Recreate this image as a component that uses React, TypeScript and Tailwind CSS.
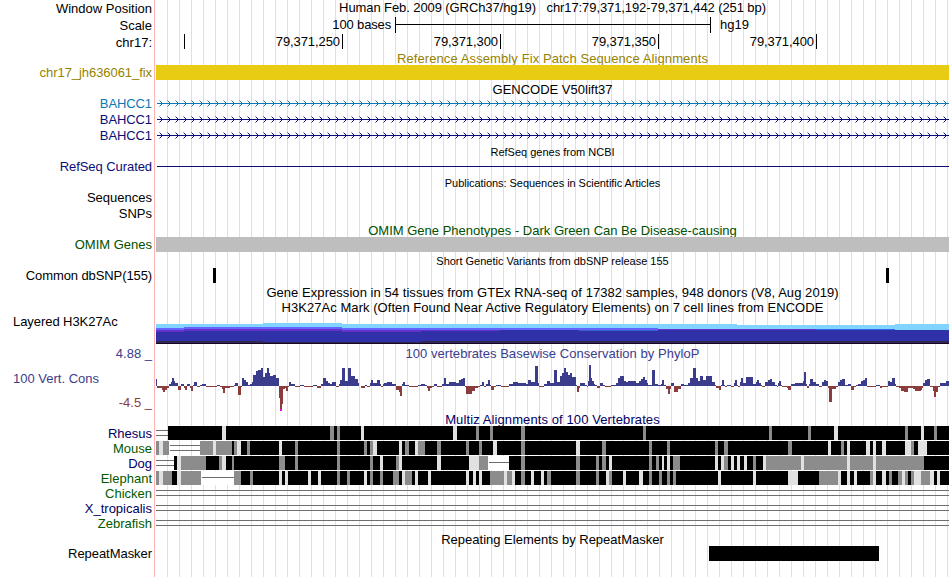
import type { ReactNode } from "react";

import clsx from "clsx";

type Tone = "l" | "g" | "k";
type Block = [x: number, width: number, tone: Tone];

// All drawings share the x axis of the browser image: tracks run from 156 to 949.
const X0 = 156;
const TRACK_WIDTH = 793;

const TONES: Record<Tone, string> = { l: "#e1e1e1", g: "#8c8c8c", k: "#000000" };

interface Species {
  name: string;
  color: string;
  start?: number;
  blocks?: Block[];
  doubleGaps?: [number, number][];
  singleGaps?: [number, number][];
}

const SPECIES: Species[] = [
  {
    name: "Rhesus",
    color: "text-[#000064]",
    doubleGaps: [[156, 168]],
    blocks: [
      [168, 781, "k"], [222, 4, "l"], [330, 4, "g"], [337, 3, "g"], [361, 3, "l"], [453, 4, "l"], [476, 3, "g"],
      [490, 3, "g"], [521, 4, "g"], [643, 3, "g"], [769, 3, "g"], [808, 3, "g"], [834, 4, "l"], [905, 3, "g"],
      [921, 3, "l"], [934, 3, "g"],
    ],
  },
  {
    name: "Mouse",
    color: "text-[#005a00]",
    doubleGaps: [[170, 200]],
    blocks: [
      [156, 13, "g"], [159, 4, "l"], [200, 749, "k"], [200, 13, "g"], [213, 3, "l"], [216, 16, "g"], [234, 3, "g"],
      [237, 4, "l"], [247, 3, "g"], [279, 3, "l"], [295, 3, "g"], [337, 3, "g"], [364, 3, "g"], [370, 3, "g"],
      [373, 4, "l"], [399, 3, "l"], [405, 4, "g"], [415, 3, "l"], [418, 7, "g"], [437, 4, "g"], [466, 3, "g"],
      [479, 3, "g"], [493, 4, "l"], [521, 4, "g"], [576, 4, "l"], [602, 4, "g"], [649, 3, "g"], [667, 3, "g"],
      [715, 3, "g"], [724, 4, "g"], [788, 4, "g"], [828, 3, "l"], [841, 3, "g"], [847, 3, "l"], [866, 4, "l"],
      [873, 3, "l"], [882, 4, "l"], [905, 6, "l"], [911, 3, "g"], [918, 9, "l"],
    ],
  },
  {
    name: "Dog",
    color: "text-[#000064]",
    doubleGaps: [[156, 174]],
    singleGaps: [[489, 509]],
    blocks: [
      [174, 314, "k"], [509, 440, "k"], [177, 4, "l"], [181, 25, "g"], [219, 3, "g"], [222, 4, "l"], [232, 2, "g"],
      [279, 6, "g"], [295, 3, "g"], [337, 3, "g"], [370, 3, "g"], [380, 3, "l"], [396, 3, "g"], [399, 3, "l"],
      [437, 4, "l"], [469, 10, "l"], [479, 9, "g"], [521, 4, "g"], [576, 4, "g"], [596, 3, "g"], [602, 4, "g"],
      [609, 3, "l"], [649, 3, "g"], [656, 3, "g"], [662, 2, "l"], [667, 3, "l"], [673, 7, "g"], [715, 3, "l"],
      [721, 3, "l"], [724, 4, "g"], [731, 3, "l"], [737, 3, "l"], [744, 3, "l"], [753, 3, "g"], [763, 3, "l"],
      [766, 158, "g"], [801, 3, "l"], [847, 3, "l"], [873, 3, "l"],
    ],
  },
  {
    name: "Elephant",
    color: "text-[#005a00]",
    singleGaps: [[202, 234]],
    blocks: [
      [156, 45, "k"], [234, 715, "k"], [156, 3, "g"], [159, 4, "l"], [163, 9, "g"], [177, 4, "l"], [181, 20, "g"],
      [234, 7, "g"], [250, 3, "g"], [279, 3, "l"], [285, 3, "l"], [308, 3, "l"], [318, 3, "l"], [337, 3, "g"],
      [347, 3, "g"], [364, 3, "l"], [370, 3, "g"], [380, 3, "g"], [393, 6, "g"], [402, 3, "l"], [405, 7, "g"],
      [415, 3, "l"], [428, 3, "l"], [466, 3, "l"], [473, 3, "l"], [479, 3, "l"], [490, 14, "g"], [504, 3, "l"],
      [507, 5, "g"], [512, 3, "l"], [521, 4, "g"], [531, 3, "l"], [541, 3, "l"], [547, 4, "g"], [576, 4, "g"],
      [596, 3, "g"], [606, 3, "l"], [609, 3, "g"], [623, 3, "l"], [639, 4, "l"], [649, 3, "g"], [659, 3, "g"],
      [667, 3, "g"], [673, 3, "g"], [718, 3, "l"], [753, 3, "l"], [788, 10, "l"], [819, 19, "g"], [838, 3, "l"],
      [847, 3, "l"], [854, 3, "l"], [870, 3, "g"], [873, 3, "l"], [882, 4, "l"], [889, 3, "g"], [898, 4, "g"],
      [902, 3, "l"], [905, 3, "g"], [911, 3, "g"], [914, 7, "l"], [921, 9, "g"], [930, 4, "l"], [937, 3, "l"],
    ],
  },
  { name: "Chicken", color: "text-[#005a00]", doubleGaps: [[156, 949]] },
  { name: "X_tropicalis", color: "text-[#000064]", doubleGaps: [[156, 949]] },
  { name: "Zebrafish", color: "text-[#005a00]", doubleGaps: [[156, 949]] },
];

// Each score holds from its x until the next entry.
const PHYLOP: [x: number, score: number][] = [
  [156, 7], [157, -2], [162, -4], [163, -6], [165, -4], [167, -2], [169, 2], [171, 4], [172, 8], [174, 5], [175, 3],
  [178, -4], [181, 2], [184, -2], [185, -4], [187, 2], [190, -2], [191, -5], [193, 1], [194, 4], [197, -1], [200, 1],
  [202, 2], [206, -1], [217, 1], [220, -1], [222, -3], [223, -7], [225, -2], [230, -1], [234, 1], [235, 3], [238, -9],
  [241, -1], [242, 8], [244, 6], [246, 4], [248, 1], [250, 2], [252, 4], [253, 11], [256, 15], [258, 16], [261, 18],
  [263, 9], [265, 13], [267, 18], [269, 13], [270, 10], [273, 11], [276, 8], [279, -12], [280, -24], [282, -18],
  [283, -3], [285, -2], [286, -5], [288, -1], [289, 4], [291, 2], [295, -1], [300, 1], [304, -1], [313, 1], [317, -2],
  [321, 2], [323, 8], [326, 5], [328, 3], [330, 2], [332, 4], [336, -1], [339, 2], [340, 6], [342, 18], [345, 5],
  [348, 18], [351, 10], [355, 7], [358, 3], [359, 0], [361, -2], [365, 1], [367, -1], [370, 3], [371, 6], [373, 3],
  [377, 6], [380, 2], [381, -1], [383, 2], [384, 3], [387, 4], [392, 2], [396, -4], [399, -6], [400, -10], [402, 2],
  [403, 4], [405, 1], [409, -1], [418, 1], [421, 2], [425, 1], [427, -2], [428, -5], [430, -2], [432, -1], [434, 2],
  [437, -1], [442, 2], [444, 8], [446, 2], [449, 4], [456, 3], [459, 6], [461, 7], [463, 8], [465, -1], [466, -8],
  [472, -5], [475, -2], [478, -1], [480, 1], [482, 4], [484, -1], [486, 2], [488, 6], [490, 1], [491, -4], [494, -1],
  [496, 1], [501, -1], [509, 2], [513, 4], [518, 3], [526, 2], [528, 6], [531, 4], [535, 20], [538, 3], [539, -1],
  [544, 2], [547, 5], [550, 3], [554, 16], [557, 4], [560, 10], [562, 13], [564, 18], [566, 14], [568, 11],
  [570, 13], [572, 9], [576, 1], [577, -6], [579, -2], [580, 3], [585, 1], [587, -1], [588, 5], [589, 21], [591, 8],
  [592, 5], [594, 2], [595, 1], [597, -2], [600, 3], [603, 1], [605, -1], [611, 1], [616, 3], [618, 8], [620, 10],
  [624, 5], [626, 4], [628, 5], [636, 3], [639, 5], [641, 7], [643, 9], [645, 6], [647, 3], [648, 1], [652, 16],
  [655, 2], [658, 1], [661, 2], [662, 6], [664, 1], [666, -3], [668, -8], [670, -3], [671, 3], [674, -6], [678, -3],
  [681, 2], [684, 1], [688, 3], [690, 8], [693, 18], [696, 8], [698, 5], [700, 10], [703, 6], [706, 10], [712, 4],
  [715, 1], [716, -2], [719, -4], [721, 1], [722, 6], [724, 1], [725, -1], [727, 1], [731, -1], [734, 3], [735, 6],
  [737, 1], [738, -1], [740, 4], [741, 8], [743, 3], [746, 9], [753, 2], [756, 4], [757, 6], [759, 3], [761, 1],
  [762, -1], [765, 4], [768, 6], [770, 7], [772, 4], [775, 1], [777, -1], [778, 3], [779, 5], [781, 1], [782, -1],
  [787, -2], [788, -4], [791, 2], [795, 3], [803, 5], [804, 14], [806, 2], [807, -2], [809, 2], [810, 7], [813, 4],
  [816, 2], [819, -1], [822, 4], [824, 6], [826, 5], [828, -2], [829, -16], [832, -3], [836, -1], [838, 4], [840, 6],
  [842, 7], [845, 1], [848, 2], [851, -4], [854, -1], [856, 1], [858, 2], [861, 5], [863, 6], [865, 8], [867, -1],
  [876, 1], [880, -2], [882, -1], [888, 5], [890, 4], [892, 8], [895, 2], [896, -1], [899, -2], [901, -5], [904, -6],
  [908, -2], [913, -3], [915, -5], [921, -4], [922, -2], [923, 3], [925, 6], [927, 7], [930, -1], [933, -5],
  [934, -11], [936, -6], [938, -1], [940, 3], [946, 5], [949, 0],
];

// Tops of the overlaid cell line signals, one entry per 25 bp bin.
const H3K27AC = [
  { x: 156, sky: 10, violet: 14, purple: 16, navy: 18, dark: 27 },
  { x: 184, sky: 10, violet: 13, purple: 15, navy: 17, dark: 27 },
  { x: 263, sky: 9, violet: 13, purple: 15, navy: 17, dark: 28 },
  { x: 342, sky: 10, violet: 14, purple: 16, navy: 18, dark: 28 },
  { x: 421, sky: 10, violet: 14, purple: 16, navy: 17, dark: 27 },
  { x: 500, sky: 10, violet: 14, purple: 16, navy: 16, dark: 27 },
  { x: 579, sky: 10, violet: 14, purple: 16, navy: 17, dark: 27, mid: "#3264c8" },
  { x: 658, sky: 10, violet: 15, purple: 15, navy: 16, dark: 27 },
  { x: 737, sky: 11, violet: 15, purple: 15, navy: 16, dark: 27 },
  { x: 816, sky: 11, violet: 15, purple: 15, navy: 16, dark: 27, mid: "#3264e6" },
  { x: 895, sky: 10, violet: 16, purple: 16, navy: 16, dark: 27 },
];

interface TitleProps {
  className?: string;
  children: ReactNode;
}

function Title({ className = "h-3.5", children }: TitleProps) {
  return (
    <div className={clsx("ml-[156px] flex w-[793px] justify-center leading-[15px]", className)}>
      <span className="whitespace-pre">{children}</span>
    </div>
  );
}

interface RowProps {
  label: string;
  labelClass?: string;
  className?: string;
  children?: ReactNode;
}

function Row({ label, labelClass, className = "h-4", children }: RowProps) {
  return (
    <div className={clsx("flex", className)}>
      <div className={clsx("mr-1 w-[152px] shrink-0 text-right leading-[15px] whitespace-pre", labelClass)}>{label}</div>
      <div className="w-[793px] shrink-0">{children}</div>
    </div>
  );
}

function Plot({ height, children }: { height: number; children: ReactNode }) {
  return (
    <svg
      width={TRACK_WIDTH}
      height={height}
      viewBox={`${X0} 0 ${TRACK_WIDTH} ${height}`}
      shapeRendering="crispEdges"
      className="block"
    >
      {children}
    </svg>
  );
}

function Intron({ color }: { color: string }) {
  const arrows = Array.from({ length: 99 }, (_, i) => 159 + i * 8);

  return (
    <Plot height={15}>
      <rect x={157} y={7} width={792} height={1} fill={color} />
      {arrows.map((x) => (
        <g key={x} fill={color}>
          <rect x={x} y={4} width={1} height={1} opacity={0.45} />
          <rect x={x + 1} y={5} width={1} height={1} />
          <rect x={x + 2} y={6} width={1} height={1} />
          <rect x={x + 2} y={8} width={1} height={1} />
          <rect x={x + 1} y={9} width={1} height={1} />
          <rect x={x} y={10} width={1} height={1} opacity={0.45} />
        </g>
      ))}
    </Plot>
  );
}

function Histone() {
  return (
    <Plot height={30}>
      {H3K27AC.map((bin, i) => {
        const width = (H3K27AC[i + 1]?.x ?? 949) - bin.x;
        return (
          <g key={bin.x}>
            <rect x={bin.x} y={bin.sky} width={width} height={30 - bin.sky} fill="#80d4ff" />
            <rect x={bin.x} y={bin.violet} width={width} height={30 - bin.violet} fill="#6464ff" />
            <rect x={bin.x} y={bin.purple} width={width} height={30 - bin.purple} fill={bin.mid ?? "#6432c8"} />
            <rect x={bin.x} y={bin.navy} width={width} height={30 - bin.navy} fill="#3030a8" />
            <rect x={bin.x} y={bin.dark} width={width} height={30 - bin.dark} fill="#302850" />
            <rect x={bin.x} y={29} width={width} height={1} fill="#180828" />
          </g>
        );
      })}
    </Plot>
  );
}

function Conservation() {
  return (
    <Plot height={51}>
      {PHYLOP.slice(0, -1).map(([x, score], i) => (
        <rect
          key={x}
          x={x}
          y={score > 0 ? 25 - score : 25}
          width={PHYLOP[i + 1][0] - x}
          height={Math.abs(score)}
          fill={score > 0 ? "#3c3c8c" : "#8c3c3c"}
        />
      ))}
      <rect x={280} y={48} width={2} height={2} fill="#ff00ff" />
    </Plot>
  );
}

function Alignment({ blocks = [], doubleGaps = [], singleGaps = [] }: Species) {
  return (
    <Plot height={14}>
      {doubleGaps.map(([from, to]) => (
        <g key={from} fill="#6e6e6e">
          <rect x={from} y={4} width={to - from} height={1} />
          <rect x={from} y={9} width={to - from} height={1} />
        </g>
      ))}
      {singleGaps.map(([from, to]) => (
        <g key={from}>
          <rect x={from} y={0} width={to - from} height={14} fill="#ffffff" />
          <rect x={from} y={6} width={to - from} height={1} fill="#6e6e6e" />
        </g>
      ))}
      {blocks.map(([x, width, tone], i) => (
        <rect key={i} x={x} y={0} width={width} height={14} fill={TONES[tone]} />
      ))}
    </Plot>
  );
}

export default function App() {
  return (
    <main className="h-[577px] w-[950px] overflow-hidden bg-white font-['Liberation_Sans',Arial,sans-serif] text-[13px] text-black">
      <div className="h-full w-[949px] bg-[linear-gradient(90deg,transparent_154px,#ffb4b4_154px,#ffb4b4_155px,transparent_155px),linear-gradient(90deg,white_156px,transparent_156px),repeating-linear-gradient(90deg,transparent_0,transparent_11px,#dcdcff_11px,#dcdcff_12px)]">
        <Row label="Window Position" className="h-[17px]" labelClass="pt-px">
          <div className="text-center leading-[15px] tracking-[-0.09px] whitespace-pre">
            Human Feb. 2009 (GRCh37/hg19)   chr17:79,371,192-79,371,442 (251 bp)
          </div>
        </Row>
        <Row label="Scale" className="h-[17px]" labelClass="pt-px">
          <div className="flex leading-[15px]">
            <span className="w-[235px] text-right tracking-[-0.15px]">100 bases</span>
            <span className="ml-1 h-4 w-[316px] border-x border-black pt-[7px]">
              <span className="block h-px bg-black" />
            </span>
            <span className="ml-[9px]">hg19</span>
          </div>
        </Row>
        <Row label="chr17:" className="h-[17px]" labelClass="pt-px">
          <div className="flex h-[15px] leading-[15px] tracking-[-0.08px]">
            <span className="w-[29px] border-r border-black" />
            {["79,371,250", "79,371,300", "79,371,350", "79,371,400"].map((position) => (
              <span key={position} className="w-[158px] border-r border-black pr-0.5 text-right">
                {position}
              </span>
            ))}
          </div>
        </Row>

        <Title className="h-3.5 tracking-[0.1px] text-[#968200]">Reference Assembly Fix Patch Sequence Alignments</Title>
        <Row label="chr17_jh636061_fix" className="h-[17px]" labelClass="tracking-[-0.06px] text-[#968200]">
          <div className="h-[15px] bg-[#e8cc14]" />
        </Row>

        <Title>GENCODE V50lift37</Title>
        <Row label="BAHCC1" labelClass="tracking-[-0.1px] text-[#0c78b4]">
          <Intron color="#0c78b4" />
        </Row>
        <Row label="BAHCC1" labelClass="tracking-[-0.1px] text-[#0c0c78]">
          <Intron color="#0c0c78" />
        </Row>
        <Row label="BAHCC1" labelClass="tracking-[-0.1px] text-[#0c0c78]">
          <Intron color="#0c0c78" />
        </Row>

        <Title className="h-[15px] pt-px text-[11px]">RefSeq genes from NCBI</Title>
        <Row label="RefSeq Curated" labelClass="tracking-[-0.07px] text-[#0c0c78]">
          <div className="ml-px pt-[7px]">
            <div className="h-px bg-[#0c0c78]" />
          </div>
        </Row>

        <Title className="h-[15px] pt-px text-[11px] tracking-[-0.05px]">Publications: Sequences in Scientific Articles</Title>
        <Row label="Sequences" />
        <Row label="SNPs" className="h-[17px]" />

        <Title className="h-3.5 text-[#005000]">OMIM Gene Phenotypes - Dark Green Can Be Disease-causing</Title>
        <Row label="OMIM Genes" labelClass="text-[#005000]">
          <div className="h-[15px] bg-[#bebebe]" />
        </Row>

        <Title className="h-[15px] pt-px text-[11px] tracking-[-0.02px]">Short Genetic Variants from dbSNP release 155</Title>
        <Row label="Common dbSNP(155)" className="h-[17px]" labelClass="tracking-[-0.1px]">
          <Plot height={15}>
            <rect x={213} y={0} width={3} height={15} />
            <rect x={886} y={0} width={3} height={15} />
          </Plot>
        </Row>

        <Title className="h-[15px] tracking-[0.055px]">
          Gene Expression in 54 tissues from GTEx RNA-seq of 17382 samples, 948 donors (V8, Aug 2019)
        </Title>
        <Title className="h-3.5 tracking-[0.05px]">
          H3K27Ac Mark (Often Found Near Active Regulatory Elements) on 7 cell lines from ENCODE
        </Title>
        <Row label="Layered H3K27Ac" className="h-8" labelClass="pl-[13px] !text-left tracking-[-0.06px]">
          <Histone />
        </Row>

        <div className="flex h-[66px]">
          <div className="mr-1 flex w-[152px] flex-col justify-between pb-[2px] leading-[15px] text-[#3c3c8c]">
            <div className="text-right">4.88 _</div>
            <div className="pl-[13px]">100 Vert. Cons</div>
            <div className="text-right text-[#8c3c3c]">-4.5 _</div>
          </div>
          <div className="w-[793px]">
            <div className="h-[15px] text-center leading-[15px] tracking-[0.04px] text-[#3c3c8c]">
              100 vertebrates Basewise Conservation by PhyloP
            </div>
            <Conservation />
          </div>
        </div>

        <Title className="h-3.5 tracking-[0.1px] text-[#000064]">Multiz Alignments of 100 Vertebrates</Title>
        {SPECIES.map((species) => (
          <Row key={species.name} label={species.name} className="h-[15px]" labelClass={species.color}>
            <Alignment {...species} />
          </Row>
        ))}

        <Title className="mt-px h-3.5">Repeating Elements by RepeatMasker</Title>
        <Row label="RepeatMasker" labelClass="tracking-[-0.05px]">
          <div className="ml-[553px] h-[15px] w-[170px] bg-black" />
        </Row>
      </div>
    </main>
  );
}
